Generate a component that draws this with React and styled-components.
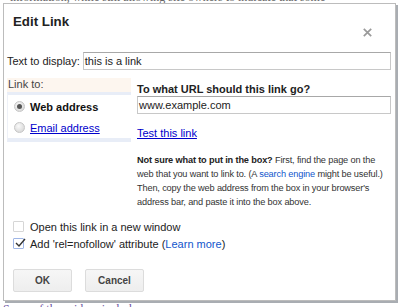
import styled, { createGlobalStyle } from "styled-components";

const Global = createGlobalStyle`
  html, body {
    margin: 0;
    padding: 0;
    background: #fff;
    overflow: hidden;
  }
  body {
    font-family: Arial, "Liberation Sans", sans-serif;
    color: #222;
  }
`;

const Page = styled.div`
  position: relative;
  width: 400px;
  height: 307px;
  overflow: hidden;
  background: #fff;
`;

const BackText = styled.p`
  margin: 0;
  font-family: "Liberation Serif", serif;
  font-size: 12px;
  line-height: 14px;
  color: ${(p) => (p.$link ? "#6a4fa0" : "#666")};
  padding-left: ${(p) => p.$left || 0}px;
  white-space: nowrap;
  margin-top: ${(p) => p.$top || 0}px;
  text-decoration: ${(p) => (p.$link ? "underline" : "none")};
`;

const Dialog = styled.div`
  position: absolute;
  left: 3px;
  top: 3px;
  width: 393px;
  height: 298px;
  background: #fff;
  border: 1px solid #bcbcbc;
  box-shadow: 2px 2px 0 #a9adb2;
  box-sizing: border-box;
`;

const TitleBar = styled.div`
  display: flex;
  align-items: flex-start;
  justify-content: space-between;
  height: 40px;
  padding: 10px 23px 0 9px;
  box-sizing: border-box;
`;

const Title = styled.h1`
  margin: 0;
  font-size: 13.3px;
  line-height: 16px;
  font-weight: bold;
  color: #222;
`;

const Close = styled.span`
  margin-top: 14px;
  display: flex;
`;

const Body = styled.div`
  padding: 8px 4px 0 3px;
`;

const Row = styled.div`
  display: flex;
  align-items: center;
  gap: 3px;
`;

const Label = styled.span`
  font-size: 11px;
  color: #222;
  white-space: nowrap;
`;

const Input = styled.div`
  flex: 1;
  height: 18px;
  border: 1px solid #c8c8c8;
  border-top-color: #a8a8a8;
  box-sizing: border-box;
  font-size: 11px;
  line-height: 16px;
  padding-left: 1px;
  color: #222;
`;

const Columns = styled.div`
  display: flex;
  margin-top: 8px;
  gap: 6px;
`;

const LinkPanel = styled.div`
  width: 124px;
  flex: none;
`;

const PanelHead = styled.div`
  background: #fdf6ef;
  font-size: 11px;
  color: #444;
  padding-left: 1px;
  height: 14px;
  line-height: 13px;
`;

const Options = styled.div`
  border-top: 3px solid #e8edf7;
  border-bottom: 4px solid #e8edf7;
  border-left: 1px solid #eef1f8;
  padding: 1px 0 0 6px;
  display: flex;
  flex-direction: column;
`;

const Option = styled.div`
  display: flex;
  align-items: center;
  height: 21px;
  gap: 5px;
  font-size: 11px;
  font-weight: ${(p) => (p.$active ? "bold" : "normal")};
  color: ${(p) => (p.$active ? "#111" : "#00c")};
  text-decoration: ${(p) => (p.$active ? "none" : "underline")};
`;

const Radio = styled.span`
  width: 9px;
  height: 9px;
  border-radius: 50%;
  background: radial-gradient(circle at 40% 35%, #fafafa, #d0d0d0);
  border: 1px solid #c6c6c6;
  position: relative;
  flex: none;
  &::after {
    content: "";
    display: ${(p) => (p.$checked ? "block" : "none")};
    position: absolute;
    left: 2px;
    top: 2px;
    width: 5px;
    height: 5px;
    border-radius: 50%;
    background: #555;
  }
`;

const Right = styled.div`
  flex: 1;
  padding-top: 4px;
`;

const Question = styled.div`
  font-size: 11px;
  line-height: 14px;
  font-weight: bold;
  color: #222;
`;

const TestLink = styled.a`
  display: block;
  margin-top: 12px;
  font-size: 11px;
  line-height: 14px;
  color: #00c;
  text-decoration: underline;
`;

const Help = styled.p`
  margin: 13px 0 0;
  font-size: 9.2px;
  letter-spacing: -0.15px;
  line-height: 14px;
  color: #333;
  white-space: nowrap;
  b {
    color: #222;
  }
  span {
    color: #15c;
  }
`;

const Checks = styled.div`
  padding: 9px 0 0 6px;
  display: flex;
  flex-direction: column;
`;

const CheckRow = styled.label`
  display: flex;
  align-items: center;
  height: 17px;
  gap: 6px;
  font-size: 11px;
  color: #222;
  span {
    color: #15c;
  }
`;

const Box = styled.span`
  width: 11px;
  height: 11px;
  box-sizing: border-box;
  border: 1px solid ${(p) => (p.$checked ? "#9fb6e6" : "#d6d6d6")};
  border-radius: 1px;
  position: relative;
  flex: none;
  svg {
    position: absolute;
    left: 0;
    top: -1px;
  }
`;

const Buttons = styled.div`
  display: flex;
  gap: 13px;
  padding: 17px 0 0 6px;
`;

const Button = styled.div`
  width: 59px;
  height: 23px;
  box-sizing: border-box;
  border: 1px solid #dcdcdc;
  border-radius: 2px;
  background: linear-gradient(#f6f6f6, #eeeeee);
  font-size: 10px;
  font-weight: bold;
  color: #444;
  display: flex;
  align-items: center;
  justify-content: center;
`;

export default function App() {
  return (
    <Page>
      <Global />
      <BackText $top={-10} $left={10}>
        information, while still allowing site owners to indicate that some
      </BackText>
      <BackText $top={298} $left={3} $link>
        Some of these ideas include
      </BackText>
      <Dialog>
        <TitleBar>
          <Title>Edit Link</Title>
          <Close>
            <svg width="9" height="9" viewBox="0 0 9 9">
              <path d="M0.8 0.8L8.2 8.2M8.2 0.8L0.8 8.2" stroke="#9a9a9a" strokeWidth="1.7" />
            </svg>
          </Close>
        </TitleBar>
        <Body>
          <Row>
            <Label>Text to display:</Label>
            <Input>this is a link</Input>
          </Row>
          <Columns>
            <LinkPanel>
              <PanelHead>Link to:</PanelHead>
              <Options>
                <Option $active>
                  <Radio $checked />
                  Web address
                </Option>
                <Option>
                  <Radio />
                  Email address
                </Option>
              </Options>
            </LinkPanel>
            <Right>
              <Question>To what URL should this link go?</Question>
              <Input>www.example.com</Input>
              <TestLink>Test this link</TestLink>
              <Help>
                <b>Not sure what to put in the box?</b> First, find the page on the
                <br />
                web that you want to link to. (A <span>search engine</span> might be useful.)
                <br />
                Then, copy the web address from the box in your browser's
                <br />
                address bar, and paste it into the box above.
              </Help>
            </Right>
          </Columns>
          <Checks>
            <CheckRow>
              <Box />
              Open this link in a new window
            </CheckRow>
            <CheckRow>
              <Box $checked>
                <svg width="12" height="10" viewBox="0 0 12 10">
                  <path d="M2 5L5 8L11 1" stroke="#333" strokeWidth="1.4" fill="none" />
                </svg>
              </Box>
              <div>
                Add 'rel=nofollow' attribute (<span>Learn more</span>)
              </div>
            </CheckRow>
          </Checks>
          <Buttons>
            <Button>OK</Button>
            <Button>Cancel</Button>
          </Buttons>
        </Body>
      </Dialog>
    </Page>
  );
}
